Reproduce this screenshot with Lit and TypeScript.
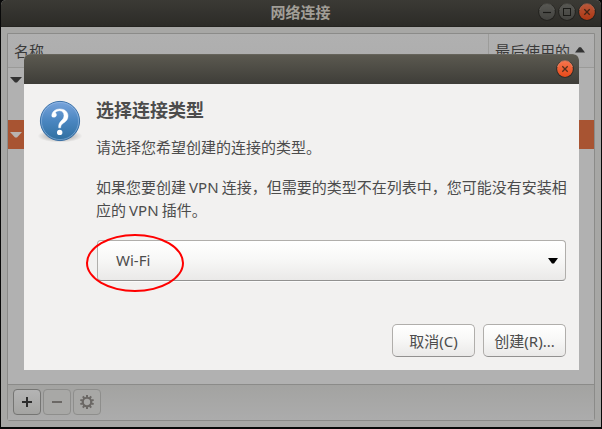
import { LitElement, html, css, svg } from "lit";
import { customElement, property } from "lit/decorators.js";

type Kind = "min" | "max" | "close";

@customElement("window-button")
class WindowButton extends LitElement {
  @property() kind: Kind = "close";
  static styles = css`
    :host { display: block; width: 18px; height: 18px; }
    svg { display: block; }
  `;
  render() {
    const close = this.kind === "close";
    const glyph = {
      min: svg`<path d="M5 9.5H13" stroke="#22221f" stroke-width="1.2"/>`,
      max: svg`<rect x="5.5" y="5.5" width="7" height="7" fill="none" stroke="#22221f"/>`,
      close: svg`<path d="M6.3 6.3L11.7 11.7M11.7 6.3L6.3 11.7" stroke="#55301c" stroke-width="1.3"/>`,
    }[this.kind];
    return html`<svg width="18" height="18" viewBox="0 0 18 18">
      <defs><linearGradient id="g" x1="0" y1="0" x2="0" y2="1">
        <stop offset="0" stop-color=${close ? "#f7744c" : "#74746e"} />
        <stop offset="1" stop-color=${close ? "#e64a1a" : "#5a5a55"} />
      </linearGradient></defs>
      <circle cx="9" cy="9" r="8.8" fill="#2c2b27" />
      <circle cx="9" cy="9" r="7.9" fill="url(#g)" />
      <path d="M1.6 7A7.5 7.5 0 0 1 16.4 7" fill="none" stroke=${close ? "#ff9a79" : "#84847d"} stroke-width=".7" />
      ${glyph}
    </svg>`;
  }
}

@customElement("connections-window")
class ConnectionsWindow extends LitElement {
  static styles = css`
    :host { display: flex; flex-direction: column; height: 427px; background: #a7a7a5; border-radius: 5px 5px 0 0; overflow: hidden; color: #3a3a3a; }
    .title { height: 27px; box-sizing: border-box; display: grid; grid-template-columns: 1fr auto 1fr; align-items: center; padding: 0 5px; background: linear-gradient(#3b3a35, #2c2b27); border-bottom: 1px solid #252420; }
    .name { grid-column: 2; font-weight: 700; font-size: 15px; line-height: 24px; margin: -2px 1px 0 0; color: #a19e97; }
    .controls { display: flex; gap: 2px; justify-self: end; margin-top: -2px; filter: brightness(.75); }
    .frame { margin: 6px; flex: 1; display: flex; flex-direction: column; border: 1px solid #8b8b89; border-radius: 0 0 3px 3px; }
    .head { height: 34px; box-sizing: border-box; display: grid; grid-template-columns: 1fr 106px; border-bottom: 1px solid #9a9a98; background: linear-gradient(#b0b0b0, #adadad); line-height: 34px; }
    .cell { padding-left: 6px; }
    .cell.last { border-left: 1px solid #9c9c9a; display: flex; gap: 5px; align-items: center; }
    .cell.last svg { margin-top: -2px; }
    .rows { flex: 1; background: #b1b1b1; }
    .row { height: 24px; display: flex; padding-left: 2px; align-items: center; color: #333; }
    .gap { height: 28px; }
    .row.sel { height: 29px; background: #a85432; color: #b9b4b1; }
    .tools { height: 36px; box-sizing: border-box; padding: 4px 5px; display: flex; gap: 2px; border-top: 1px solid #8b8b89; background: linear-gradient(#a3a3a1, #acacac); }
    .tool { width: 28px; height: 26px; box-sizing: border-box; display: grid; place-items: center; border: 1px solid #8e8e8c; border-radius: 4px; color: #6b6865; background: #a8a8a6; }
    .tool.on { border-color: #757573; color: #2d2d2d; background: linear-gradient(#b4b4b4, #a4a4a2); }
    svg { display: block; }
  `;
  render() {
    const teeth = Array.from({ length: 10 }, (_, i) => i * 36);
    const down = html`<svg width="12" height="6" viewBox="0 0 12 6"><path d="M0 0H12L7 5.5H5Z" fill="currentColor" /></svg>`;
    return html`
      <div class="title">
        <span class="name">网络连接</span>
        <div class="controls">
          <window-button kind="min"></window-button>
          <window-button kind="max"></window-button>
          <window-button kind="close"></window-button>
        </div>
      </div>
      <div class="frame">
        <div class="head">
          <div class="cell">名称</div>
          <div class="cell last">最后使用的
            <svg width="10" height="6" viewBox="0 0 10 6"><path d="M0 5.5L4 .3H6L10 5.5Z" fill="#333" /></svg>
          </div>
        </div>
        <div class="rows">
          <div class="row">${down}</div>
          <div class="gap"></div>
          <div class="row sel">${down}</div>
        </div>
        <div class="tools">
          <div class="tool on"><svg width="10" height="10" viewBox="0 0 10 10"><path d="M0 5H10M5 0V10" stroke="currentColor" stroke-width="2" /></svg></div>
          <div class="tool"><svg width="10" height="10" viewBox="0 0 10 10"><path d="M0 5H10" stroke="currentColor" stroke-width="2" /></svg></div>
          <div class="tool"><svg width="14" height="14" viewBox="0 0 14 14">
            <circle cx="7" cy="7" r="4.2" fill="none" stroke="currentColor" stroke-width="2.1" />
            ${teeth.map((a) => svg`<path d="M7 0V3" stroke="currentColor" stroke-width="2" transform=${`rotate(${a} 7 7)`} />`)}
          </svg></div>
        </div>
      </div>`;
  }
}

@customElement("type-dialog")
class TypeDialog extends LitElement {
  static styles = css`
    :host { display: flex; flex-direction: column; background: #f2f1f0; border-radius: 6px 6px 0 0; overflow: hidden; color: #4c4c4c; }
    .title { height: 30px; box-sizing: border-box; flex: none; padding: 5px 5px 0; display: flex; justify-content: flex-end; background: linear-gradient(#5b5950, #3e3d38); border-top: 1px solid #66645b; }
    .main { display: grid; grid-template-columns: 48px 1fr; column-gap: 10px; padding: 12px 10px 0 12px; }
    .icon { display: block; margin-top: 2px; }
    .text { padding-left: 2px; }
    h1 { margin: 2px 0 0; font-size: 18px; line-height: 24px; font-weight: 700; }
    p { margin: 0; line-height: 23px; word-spacing: -.8px; }
    .first { margin-top: 14px; }
    .second { margin-top: 17px; }
    .combo { margin: 18px 3px 0 1px; height: 41px; box-sizing: border-box; border: 1px solid #b0aeab; border-bottom-color: #929190; border-radius: 4px; background: linear-gradient(#fff, #f8f8f7 45%, #eae9e8); display: flex; align-items: center; justify-content: space-between; padding: 0 7px 0 18px; box-shadow: 0 1px #fbfbfb; }
    .actions { margin-top: auto; padding: 0 13px 13px; display: flex; justify-content: flex-end; gap: 8px; }
    .btn { height: 33px; width: 83px; box-sizing: border-box; display: grid; place-items: center; line-height: 23px; padding-top: 1px; border: 1px solid #b0aeab; border-bottom-color: #929190; border-radius: 5px; background: linear-gradient(#fff, #f8f8f7 45%, #eae9e8); }
  `;
  render() {
    return html`
      <div class="title"><window-button kind="close"></window-button></div>
      <div class="main">
        <svg class="icon" width="48" height="48" viewBox="0 0 48 48">
          <defs>
            <linearGradient id="b" x1="0" y1="0" x2="0" y2="1">
              <stop offset="0" stop-color="#79a4dc" /><stop offset=".5" stop-color="#4a86c0" /><stop offset="1" stop-color="#2f6fa0" />
            </linearGradient>
            <radialGradient id="s"><stop offset=".5" stop-color="#000" stop-opacity=".22" /><stop offset="1" stop-color="#000" stop-opacity="0" /></radialGradient>
          </defs>
          <ellipse cx="24" cy="38" rx="22.5" ry="6.5" fill="url(#s)" />
          <circle cx="24" cy="23" r="19.6" fill="url(#b)" stroke="#2c66a0" stroke-width=".9" />
          <circle cx="24" cy="23" r="18.6" fill="none" stroke="#a5c6ea" stroke-opacity=".55" stroke-width=".9" />
          <path d="M15.8 18C15.8 14 19 11 23.8 11C28.7 11 32 13.8 32 18C32 22 29.5 23.8 27.2 25.2C25.4 26.4 24.8 27.4 24.6 29.8H22.7C22.5 26.6 23.2 25 25 23.1C26.9 21.2 28 20 28 17.6C28 14.6 26.2 12.7 23.6 12.7C21.5 12.7 20 13.5 19.3 14.7C20.1 15.5 20.6 16.2 20.4 17.2C20.2 18.5 19.3 19.2 18 19.2C16.7 19.2 15.8 18.8 15.8 18Z" fill="#fff" stroke="#fff" stroke-width=".5" />
          <circle cx="23.7" cy="34.4" r="2.7" fill="#fff" />
        </svg>
        <div class="text">
          <h1>选择连接类型</h1>
          <p class="first">请选择您希望创建的连接的类型。</p>
          <p class="second">如果您要创建 VPN 连接，但需要的类型不在列表中，您可能没有安装相应的 VPN 插件。</p>
          <div class="combo"><span>Wi-Fi</span>
            <svg width="10" height="6" viewBox="0 0 10 6"><path d="M0 0H10L6 5.5H4Z" fill="#000" /></svg>
          </div>
        </div>
      </div>
      <div class="actions"><div class="btn">取消(C)</div><div class="btn">创建(R)...</div></div>`;
  }
}

@customElement("app-root")
class AppRoot extends LitElement {
  static styles = css`
    :host { display: block; position: relative; box-sizing: border-box; width: 602px; height: 429px; padding: 0 1px; background: #090909; overflow: hidden; font: 15px/23px "Noto Sans", "Noto Sans CJK SC", sans-serif; }
    type-dialog { position: absolute; left: 24px; top: 54px; width: 555px; height: 316px; }
    .mark { position: absolute; left: 86px; top: 234px; width: 98px; height: 58px; box-sizing: border-box; border: 2px solid #ff0000; border-radius: 50%; }
  `;
  render() {
    return html`<connections-window></connections-window>
      <type-dialog></type-dialog>
      <div class="mark"></div>`;
  }
}
